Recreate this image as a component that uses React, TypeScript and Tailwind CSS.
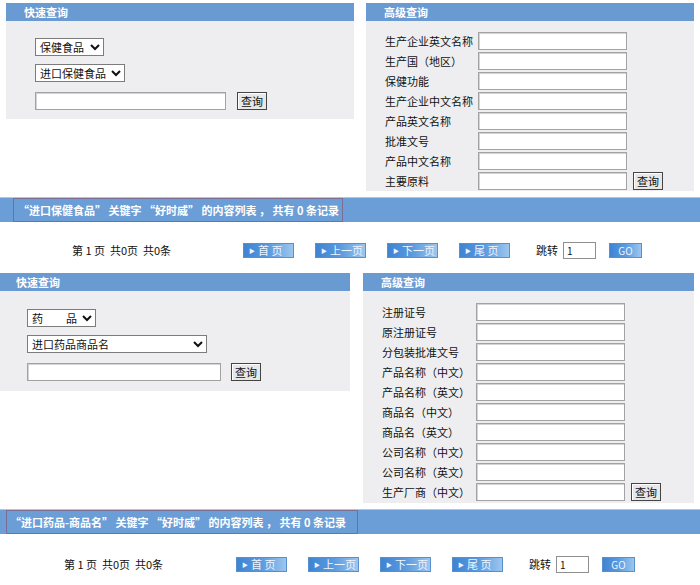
import React from 'react';

const Chevron = () => (
  <svg width="10" height="7" viewBox="0 0 10 7" className="shrink-0">
    <polyline points="1,1 5,5 9,1" fill="none" stroke="#111" strokeWidth="2" />
  </svg>
);

function Select({ className, children }: { className: string; children: React.ReactNode }) {
  return (
    <div className={`flex items-center justify-between h-[18px] bg-white border border-[#7c7c7c] pl-[4px] pr-[3px] text-[11px] text-[#111] ${className}`}>
      <div className="flex items-center">{children}</div>
      <Chevron />
    </div>
  );
}

const TextBox = ({ className }: { className: string }) => (
  <div className={`h-[18px] bg-white border border-[#a2a2a2] shadow-[inset_1px_1px_0_#d4d4d4] ${className}`} />
);

const QueryButton = ({ className = '' }: { className?: string }) => (
  <div className={`h-[18px] px-[3px] flex items-center bg-[#e7e7e7] border border-[#444] shadow-[inset_1px_1px_0_#fff] text-[11px] text-[#111] ${className}`}>
    查询
  </div>
);

const PanelHeader = ({ title, className }: { title: string; className: string }) => (
  <div className={`h-[18px] bg-[#6a9ad2] text-white font-bold text-[11px] leading-[18px] ${className}`}>{title}</div>
);

function AdvancedPanel({ rows, className, labelW, pt, pb }: { rows: string[]; className: string; labelW: string; pt: string; pb: string }) {
  return (
    <div className={className}>
      <PanelHeader title="高级查询" className="pl-[18px]" />
      <div className={`bg-[#eeeef0] pl-[19px] flex flex-col gap-[2px] ${pt} ${pb}`}>
        {rows.map((r, i) => (
          <div key={r} className="flex items-center h-[18px]">
            <div className={`text-[11px] text-[#111] ${labelW}`}>{r}</div>
            <TextBox className="w-[149px]" />
            {i === rows.length - 1 && <QueryButton className="ml-[6px]" />}
          </div>
        ))}
      </div>
    </div>
  );
}

function PagerButton({ label }: { label: string }) {
  return (
    <div className="w-[51px] h-[15px] flex items-center pl-[5px] bg-gradient-to-r from-[#3f84d2] via-[#5a9ade] to-[#9cc6ee] border border-[#5690cf] text-[#eef5ff] text-[11px]">
      <span className="text-[6px] mr-[3px]">▶</span>
      {label}
    </div>
  );
}

function Pager({ pl, textW }: { pl: string; textW: string }) {
  return (
    <div className={`flex items-center text-[11px] text-[#111] ${pl}`}>
      <div className={`whitespace-pre ${textW}`}>第 1 页  共0页  共0条</div>
      <div className="flex gap-[21px]">
        <PagerButton label="首 页" />
        <PagerButton label="上一页" />
        <PagerButton label="下一页" />
        <PagerButton label="尾 页" />
      </div>
      <div className="ml-[26px]">跳转</div>
      <div className="ml-[5px] w-[33px] h-[17px] bg-white border border-[#8f8f8f] text-[10px] pl-[3px] leading-[15px]">1</div>
      <div className="ml-[13px] w-[33px] h-[15px] flex items-center justify-center bg-gradient-to-r from-[#3f84d2] via-[#5a9ade] to-[#9cc6ee] border border-[#5690cf] text-[#eef5ff] text-[10px]">
        GO
      </div>
    </div>
  );
}

function ResultBar({ text, boxClass }: { text: string; boxClass: string }) {
  return (
    <div className="h-[25px] bg-[#6b9ed6] border-t border-[#a9c9ec] flex items-stretch">
      <div className={`border border-[#7a6e92] flex items-center text-white font-bold text-[11px] whitespace-pre ${boxClass}`}>{text}</div>
    </div>
  );
}

export default function App() {
  return (
    <div className="w-[700px] h-[585px] bg-white overflow-hidden font-['SimSun','Noto_Sans_CJK_SC',sans-serif]">
      {/* 保健食品 */}
      <div className="pt-[3px] flex items-start">
        <div className="ml-[6px] w-[348px]">
          <PanelHeader title="快速查询" className="pl-[18px]" />
          <div className="bg-[#eeeef0] h-[98px] pl-[29px] pt-[17px]">
            <Select className="w-[69px]">保健食品</Select>
            <Select className="w-[90px] mt-[8px]">进口保健食品</Select>
            <div className="flex items-center mt-[10px]">
              <TextBox className="w-[191px]" />
              <QueryButton className="ml-[11px]" />
            </div>
          </div>
        </div>
        <AdvancedPanel
          className="ml-[12px] w-[328px]"
          labelW="w-[93px]"
          pt="pt-[11px]"
          pb="pb-[1px]"
          rows={['生产企业英文名称', '生产国（地区）', '保健功能', '生产企业中文名称', '产品英文名称', '批准文号', '产品中文名称', '主要原料']}
        />
      </div>

      <div className="mt-[6px]">
        <ResultBar
          boxClass="ml-[13px] w-[330px] pl-[4px]"
          text="“进口保健食品” 关键字 “好时威” 的内容列表 ， 共有 0 条记录"
        />
      </div>
      <div className="h-[51px] pt-[6px] flex items-center">
        <Pager pl="pl-[72px]" textW="w-[171px]" />
      </div>

      {/* 药品 */}
      <div className="flex items-start">
        <div className="w-[350px]">
          <PanelHeader title="快速查询" className="pl-[16px]" />
          <div className="bg-[#eeeef0] h-[100px] pl-[27px] pt-[18px]">
            <Select className="w-[69px]">
              <span>药</span>
              <span className="ml-[23px]">品</span>
            </Select>
            <Select className="w-[180px] mt-[8px]">进口药品商品名</Select>
            <div className="flex items-center mt-[10px]">
              <TextBox className="w-[194px]" />
              <QueryButton className="ml-[10px]" />
            </div>
          </div>
        </div>
        <AdvancedPanel
          className="ml-[13px] w-[331px]"
          labelW="w-[94px]"
          pt="pt-[12px]"
          pb="pb-[2px]"
          rows={['注册证号', '原注册证号', '分包装批准文号', '产品名称（中文）', '产品名称（英文）', '商品名（中文）', '商品名（英文）', '公司名称（中文）', '公司名称（英文）', '生产厂商（中文）']}
        />
      </div>

      <div className="mt-[6px]">
        <ResultBar
          boxClass="ml-[6px] w-[352px] pl-[3px]"
          text="“进口药品-商品名” 关键字 “好时威” 的内容列表 ， 共有 0 条记录"
        />
      </div>
      <div className="h-[52px] pt-[8px] flex items-center">
        <Pager pl="pl-[64px]" textW="w-[172px]" />
      </div>
    </div>
  );
}
